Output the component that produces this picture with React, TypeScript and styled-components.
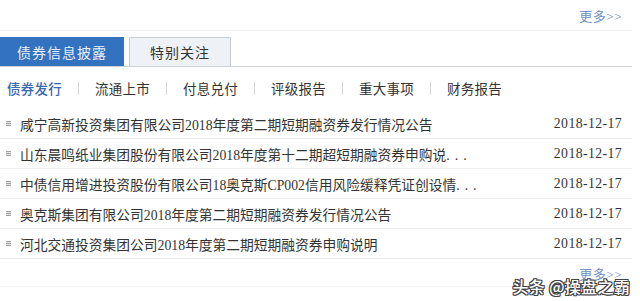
import React from "react";
import styled, { createGlobalStyle } from "styled-components";

const Global = createGlobalStyle`
  html, body { margin: 0; padding: 0; background: #fff; }
  body { font-family: "Liberation Serif", "Noto Sans CJK SC", serif; }
`;

const Page = styled.div`
  position: relative;
  width: 640px;
  height: 301px;
  overflow: hidden;
  background: #fff;
`;

const Panel = styled.div`
  width: 632px;
  display: flex;
  flex-direction: column;
`;

const TopBar = styled.div`
  height: 31px;
  border-bottom: 1px solid #f1f1f1;
  display: flex;
  align-items: center;
  justify-content: flex-end;
  padding-right: 10px;
  box-sizing: border-box;
`;

const MoreLink = styled.a`
  font-size: 13px;
  color: #6f8fc6;
  text-decoration: none;
  letter-spacing: 0.5px;
  font-family: "Liberation Serif", "Noto Sans CJK SC", serif;
`;

const TabBar = styled.div`
  margin-top: 6px;
  height: 29px;
  border-bottom: 1px solid #cfd3d8;
  display: flex;
  align-items: flex-end;
  gap: 5px;
`;

const Tab = styled.div<{ $active?: boolean }>`
  width: ${(p) => (p.$active ? "124px" : "102px")};
  height: 29px;
  box-sizing: border-box;
  display: flex;
  align-items: center;
  justify-content: center;
  font-family: "Noto Sans CJK SC", sans-serif;
  font-size: 14px;
  letter-spacing: 1px;
  background: ${(p) => (p.$active ? "#3372bf" : "#eef2f7")};
  color: ${(p) => (p.$active ? "#e9f0fb" : "#333")};
  border: ${(p) => (p.$active ? "none" : "1px solid #c6ccd4")};
  border-bottom: none;
`;

const SubNav = styled.div`
  height: 42px;
  display: flex;
  align-items: center;
  padding-left: 7px;
`;

const NavItem = styled.span<{ $active?: boolean }>`
  width: 55px;
  font-family: "Noto Sans CJK SC", sans-serif;
  font-size: 13.5px;
  letter-spacing: 0.25px;
  white-space: nowrap;
  color: ${(p) => (p.$active ? "#3a67b0" : "#333")};
  font-weight: ${(p) => (p.$active ? 500 : 400)};
`;

const NavSep = styled.span`
  width: 1px;
  height: 13px;
  background: #d4d4d4;
  margin: 0 16px;
`;

const List = styled.ul`
  list-style: none;
  margin: 0;
  padding: 0;
`;

const Row = styled.li`
  height: 30px;
  box-sizing: border-box;
  border-bottom: 1px solid #efefef;
  display: flex;
  align-items: center;
  padding-left: 6px;
  padding-right: 10px;
`;

const Bullet = styled.span`
  width: 5px;
  height: 5px;
  margin-right: 9px;
  background: repeating-linear-gradient(
    to bottom,
    #a0a0a0 0 1px,
    #e4e4e4 1px 2px
  );
  flex: none;
`;

const Title = styled.span`
  flex: 1;
  font-size: 13.75px;
  color: #333;
  white-space: nowrap;
  overflow: hidden;
`;

const Ellipsis = styled.span`
  letter-spacing: 5px;
`;

const DateText = styled.span`
  font-size: 13.75px;
  color: #333;
  letter-spacing: 0.4px;
`;

const Footer = styled.div`
  height: 28px;
  border-bottom: 1px solid #f3f3f3;
  display: flex;
  align-items: center;
  justify-content: flex-end;
  padding-right: 10px;
  padding-top: 2px;
  box-sizing: border-box;
`;

const Watermark = styled.div`
  position: absolute;
  right: 10px;
  top: 274px;
  font-family: "Noto Sans CJK SC", sans-serif;
  font-size: 16px;
  font-weight: 500;
  color: #fff;
  letter-spacing: 0.3px;
  text-shadow: 1px 0 0 #444, -1px 0 0 #444, 0 1px 0 #444, 0 -1px 0 #444,
    1px 1px 0 #444, -1px -1px 0 #444, 1px -1px 0 #444, -1px 1px 0 #444;
`;

const navItems = ["债券发行", "流通上市", "付息兑付", "评级报告", "重大事项", "财务报告"];

const rows: { title: string; cut?: boolean; date: string }[] = [
  { title: "咸宁高新投资集团有限公司2018年度第二期短期融资券发行情况公告", date: "2018-12-17" },
  { title: "山东晨鸣纸业集团股份有限公司2018年度第十二期超短期融资券申购说", cut: true, date: "2018-12-17" },
  { title: "中债信用增进投资股份有限公司18奥克斯CP002信用风险缓释凭证创设情", cut: true, date: "2018-12-17" },
  { title: "奥克斯集团有限公司2018年度第二期短期融资券发行情况公告", date: "2018-12-17" },
  { title: "河北交通投资集团公司2018年度第二期短期融资券申购说明", date: "2018-12-17" },
];

export default function App() {
  return (
    <Page>
      <Global />
      <Panel>
        <TopBar>
          <MoreLink href="#">更多&gt;&gt;</MoreLink>
        </TopBar>
        <TabBar>
          <Tab $active>债券信息披露</Tab>
          <Tab>特别关注</Tab>
        </TabBar>
        <SubNav>
          {navItems.map((n, i) => (
            <React.Fragment key={n}>
              {i > 0 && <NavSep />}
              <NavItem $active={i === 0}>{n}</NavItem>
            </React.Fragment>
          ))}
        </SubNav>
        <List>
          {rows.map((r) => (
            <Row key={r.title}>
              <Bullet />
              <Title>
                {r.title}
                {r.cut && <Ellipsis>...</Ellipsis>}
              </Title>
              <DateText>{r.date}</DateText>
            </Row>
          ))}
        </List>
        <Footer>
          <MoreLink href="#">更多&gt;&gt;</MoreLink>
        </Footer>
      </Panel>
      <Watermark>头条 @操盘之霸</Watermark>
    </Page>
  );
}
